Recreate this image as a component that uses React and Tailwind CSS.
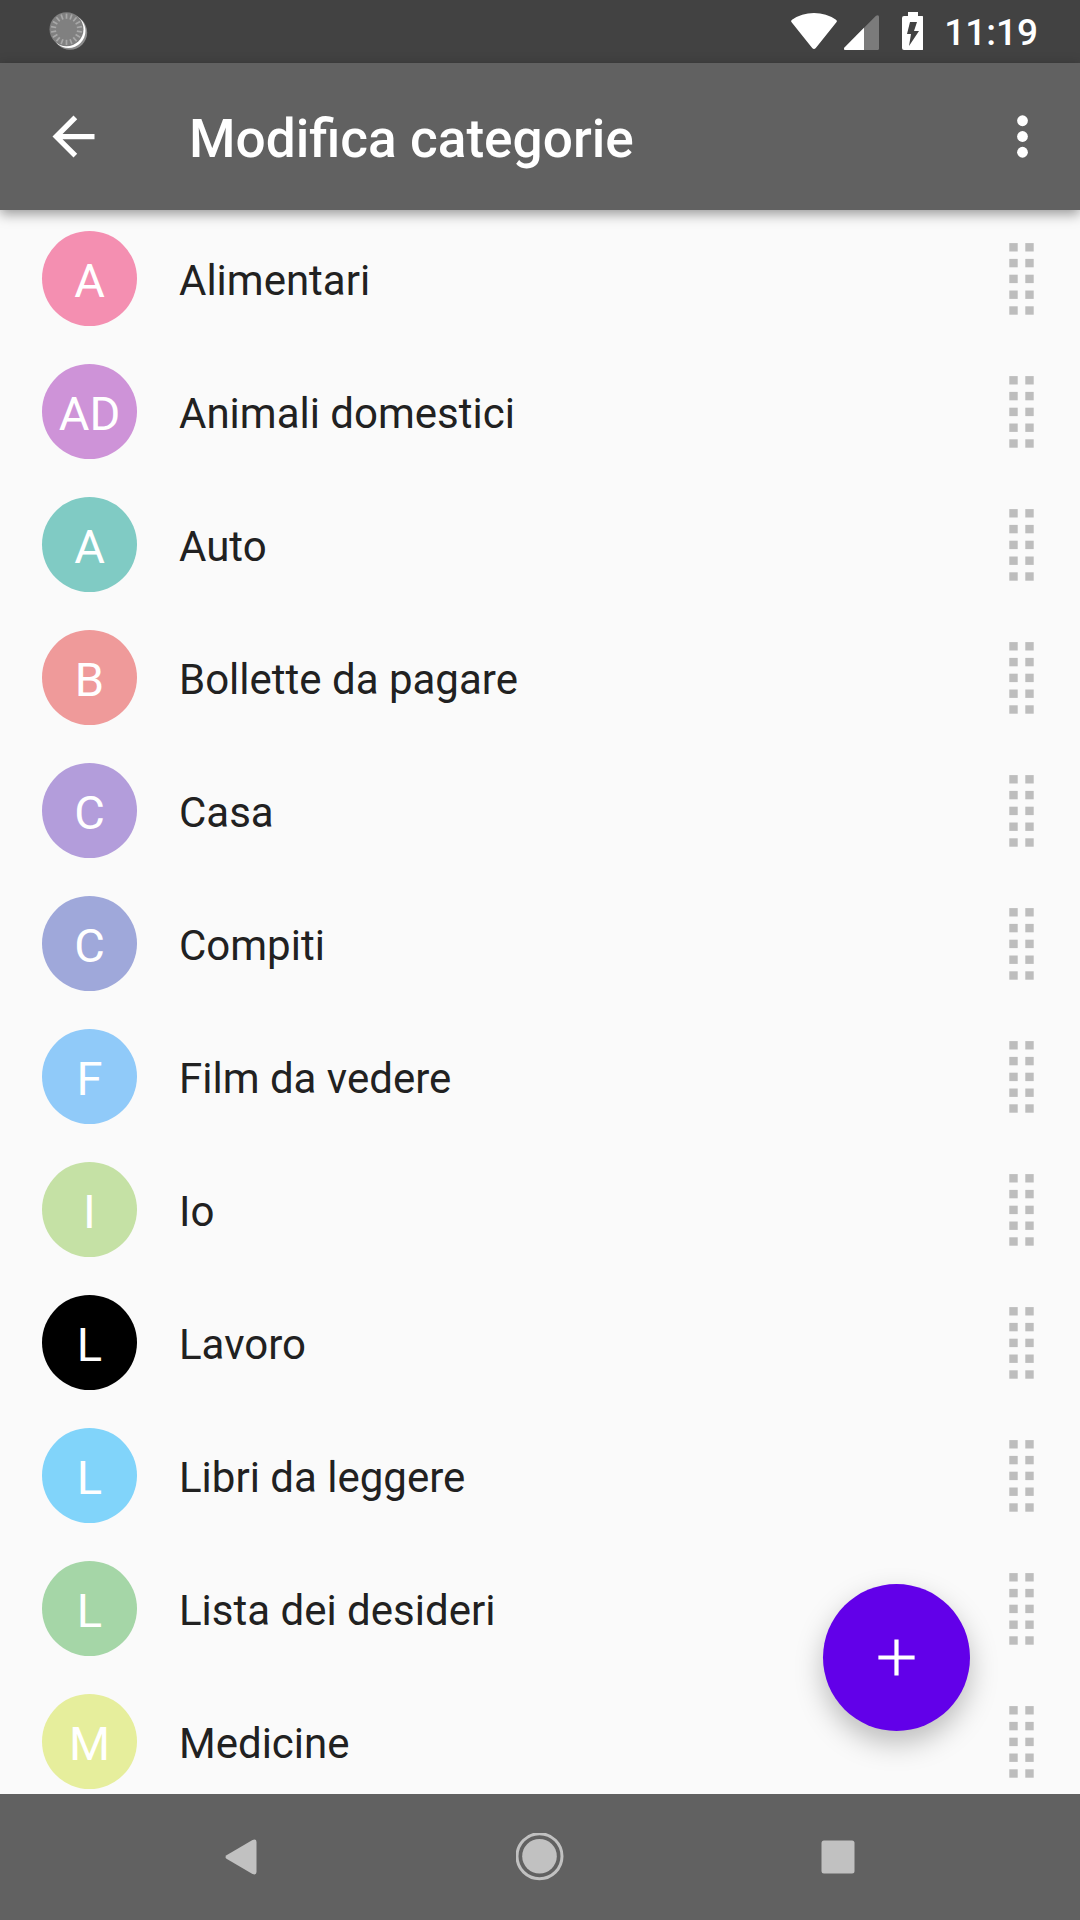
import React from "react"

const CATEGORIES = [
	{ name: "Alimentari", initials: "A", color: "bg-[#f48fb1]" },
	{ name: "Animali domestici", initials: "AD", color: "bg-[#ce93d8]" },
	{ name: "Auto", initials: "A", color: "bg-[#80cbc4]" },
	{ name: "Bollette da pagare", initials: "B", color: "bg-[#ef9a9a]" },
	{ name: "Casa", initials: "C", color: "bg-[#b39ddb]" },
	{ name: "Compiti", initials: "C", color: "bg-[#9fa8da]" },
	{ name: "Film da vedere", initials: "F", color: "bg-[#90caf9]" },
	{ name: "Io", initials: "I", color: "bg-[#c5e1a5]" },
	{ name: "Lavoro", initials: "L", color: "bg-black" },
	{ name: "Libri da leggere", initials: "L", color: "bg-[#81d4fa]" },
	{ name: "Lista dei desideri", initials: "L", color: "bg-[#a5d6a7]" },
	{ name: "Medicine", initials: "M", color: "bg-[#e6ee9c]" },
]

const TICKS = Array.from({ length: 18 }, (_, i) => i * 20)
const GRIP_ROWS = [0, 1, 2, 3, 4]

function StatusBar() {
	return (
		<div className="flex h-[63px] shrink-0 items-start justify-between bg-[#424242] pl-12 pr-[42px]">
			<svg className="mt-3 h-10 w-10" viewBox="0 0 40 40">
				<circle cx="22" cy="20.5" r="17.2" fill="#8c8c8c" />
				<circle cx="20.5" cy="19" r="17" fill="#fff" />
				<circle cx="18.5" cy="17.3" r="17" fill="#808080" />
				{TICKS.map((a) => (
					<path key={a} d="M18.5 1.6v5.2" stroke="#a8a8a8" strokeWidth="1.7" transform={`rotate(${a} 18.5 17.3)`} />
				))}
			</svg>
			<div className="flex items-start">
				<svg className="h-[63px] w-[132px]" viewBox="0 0 132 63">
					<path d="M.8 22.4Q-.7 21 1 19.8Q10.5 13 23 13T45 19.8Q46.7 21 45.2 22.4L24.8 48Q23 50.2 21.2 48Z" fill="#fff" />
					<path d="M53.5 47.5L85 15.8Q88 14 88 17V48.5Q88 50 86.5 50H54.5Q52 50 53.5 47.5Z" fill="#7b7b7b" />
					<path d="M53.5 47.5L73 27.7V50H54.5Q52 50 53.5 47.5Z" fill="#fff" />
					<path d="M117 12h10v4h4q2 0 2 2v30q0 2-2 2h-18q-2 0-2-2V18q0-2 2-2h4z" fill="#fff" />
					<path d="M119 22h7l-3 9h5l-10 15 2-12h-4z" fill="#424242" />
				</svg>
				<span className="ml-[21px] mt-[11px] text-[37px] leading-[44px] font-medium text-white">11:19</span>
			</div>
		</div>
	)
}

function Toolbar() {
	return (
		<header className="relative z-10 flex h-[147px] shrink-0 items-center bg-[#616161] pl-[42px] pr-[26px] shadow-[0_4px_12px_rgba(0,0,0,0.4)]">
			<svg className="h-[63px] w-[63px]" viewBox="0 0 24 24" fill="#fff">
				<path d="M20 11H7.83l5.59-5.59L12 4l-8 8 8 8 1.41-1.41L7.83 13H20v-2z" />
			</svg>
			<h1 className="ml-[84px] mt-1 flex-1 text-[53.2px] leading-[62px] font-medium text-white">Modifica categorie</h1>
			<svg className="h-[63px] w-[63px]" viewBox="0 0 24 24" fill="#fff">
				<circle cx="12" cy="6" r="2.05" />
				<circle cx="12" cy="12" r="2.05" />
				<circle cx="12" cy="18" r="2.05" />
			</svg>
		</header>
	)
}

function Grip() {
	return (
		<svg className="h-[74px] w-[26px]" viewBox="0 0 26 74" fill="#bdbdbd">
			{GRIP_ROWS.map((i) => (
				<React.Fragment key={i}>
					<rect x="0.3" y={1.1 + i * 15.8} width="8.4" height="8.4" />
					<rect x="16.3" y={1.1 + i * 15.8} width="8.4" height="8.4" />
				</React.Fragment>
			))}
		</svg>
	)
}

function CategoryRow({ name, initials, color }) {
	return (
		<li className="flex h-[133px] shrink-0 items-center pl-[42px] pr-[45px] pt-1">
			<div className={`flex h-[95px] w-[95px] items-center justify-center rounded-full ${color}`}>
				<span className="mt-1 text-[47px] leading-[55px] text-white">{initials}</span>
			</div>
			<span className="ml-[42px] mt-1 flex-1 text-[42px] leading-[50px] text-[#212121]">{name}</span>
			<Grip />
		</li>
	)
}

function NavBar() {
	return (
		<nav className="flex h-[126px] shrink-0 items-center justify-between bg-[#616161] px-[216px]">
			<svg className="h-12 w-12" viewBox="0 0 48 48" fill="#c1c1c1">
				<path d="M10.5 25.8Q8.5 24 10.5 22.2L36.5 7Q40.5 5.5 40.5 9V39Q40.5 42.5 36.5 41Z" />
			</svg>
			<svg className="h-12 w-12" viewBox="0 0 48 48">
				<circle cx="23.5" cy="23.2" r="22.5" fill="none" stroke="#c1c1c1" strokeWidth="3" />
				<circle cx="23.5" cy="23.2" r="17.3" fill="#c1c1c1" />
			</svg>
			<svg className="h-12 w-12" viewBox="0 0 48 48">
				<rect x="5.5" y="7.5" width="33" height="33" rx="2.5" fill="#c1c1c1" />
			</svg>
		</nav>
	)
}

function App() {
	return (
		<div className="flex h-[1920px] w-[1080px] flex-col overflow-hidden bg-[#fafafa] font-[Roboto,sans-serif]">
			<StatusBar />
			<Toolbar />
			<main className="relative flex min-h-0 flex-1 flex-col overflow-hidden">
				<ul className="flex flex-col">
					{CATEGORIES.map((c) => (
						<CategoryRow key={c.name} {...c} />
					))}
				</ul>
				<button
					type="button"
					aria-label="Aggiungi"
					className="absolute right-[110px] bottom-[63px] flex h-[147px] w-[147px] items-center justify-center rounded-full bg-[#6200e9] shadow-[0_12px_28px_rgba(0,0,0,0.25)]">
					<svg className="h-[63px] w-[63px]" viewBox="0 0 24 24" fill="#fff">
						<path d="M5.1 11.2h6.1V5.1h1.6v6.1h6.1v1.6h-6.1v6.1h-1.6v-6.1H5.1z" />
					</svg>
				</button>
			</main>
			<NavBar />
		</div>
	)
}

export default App
